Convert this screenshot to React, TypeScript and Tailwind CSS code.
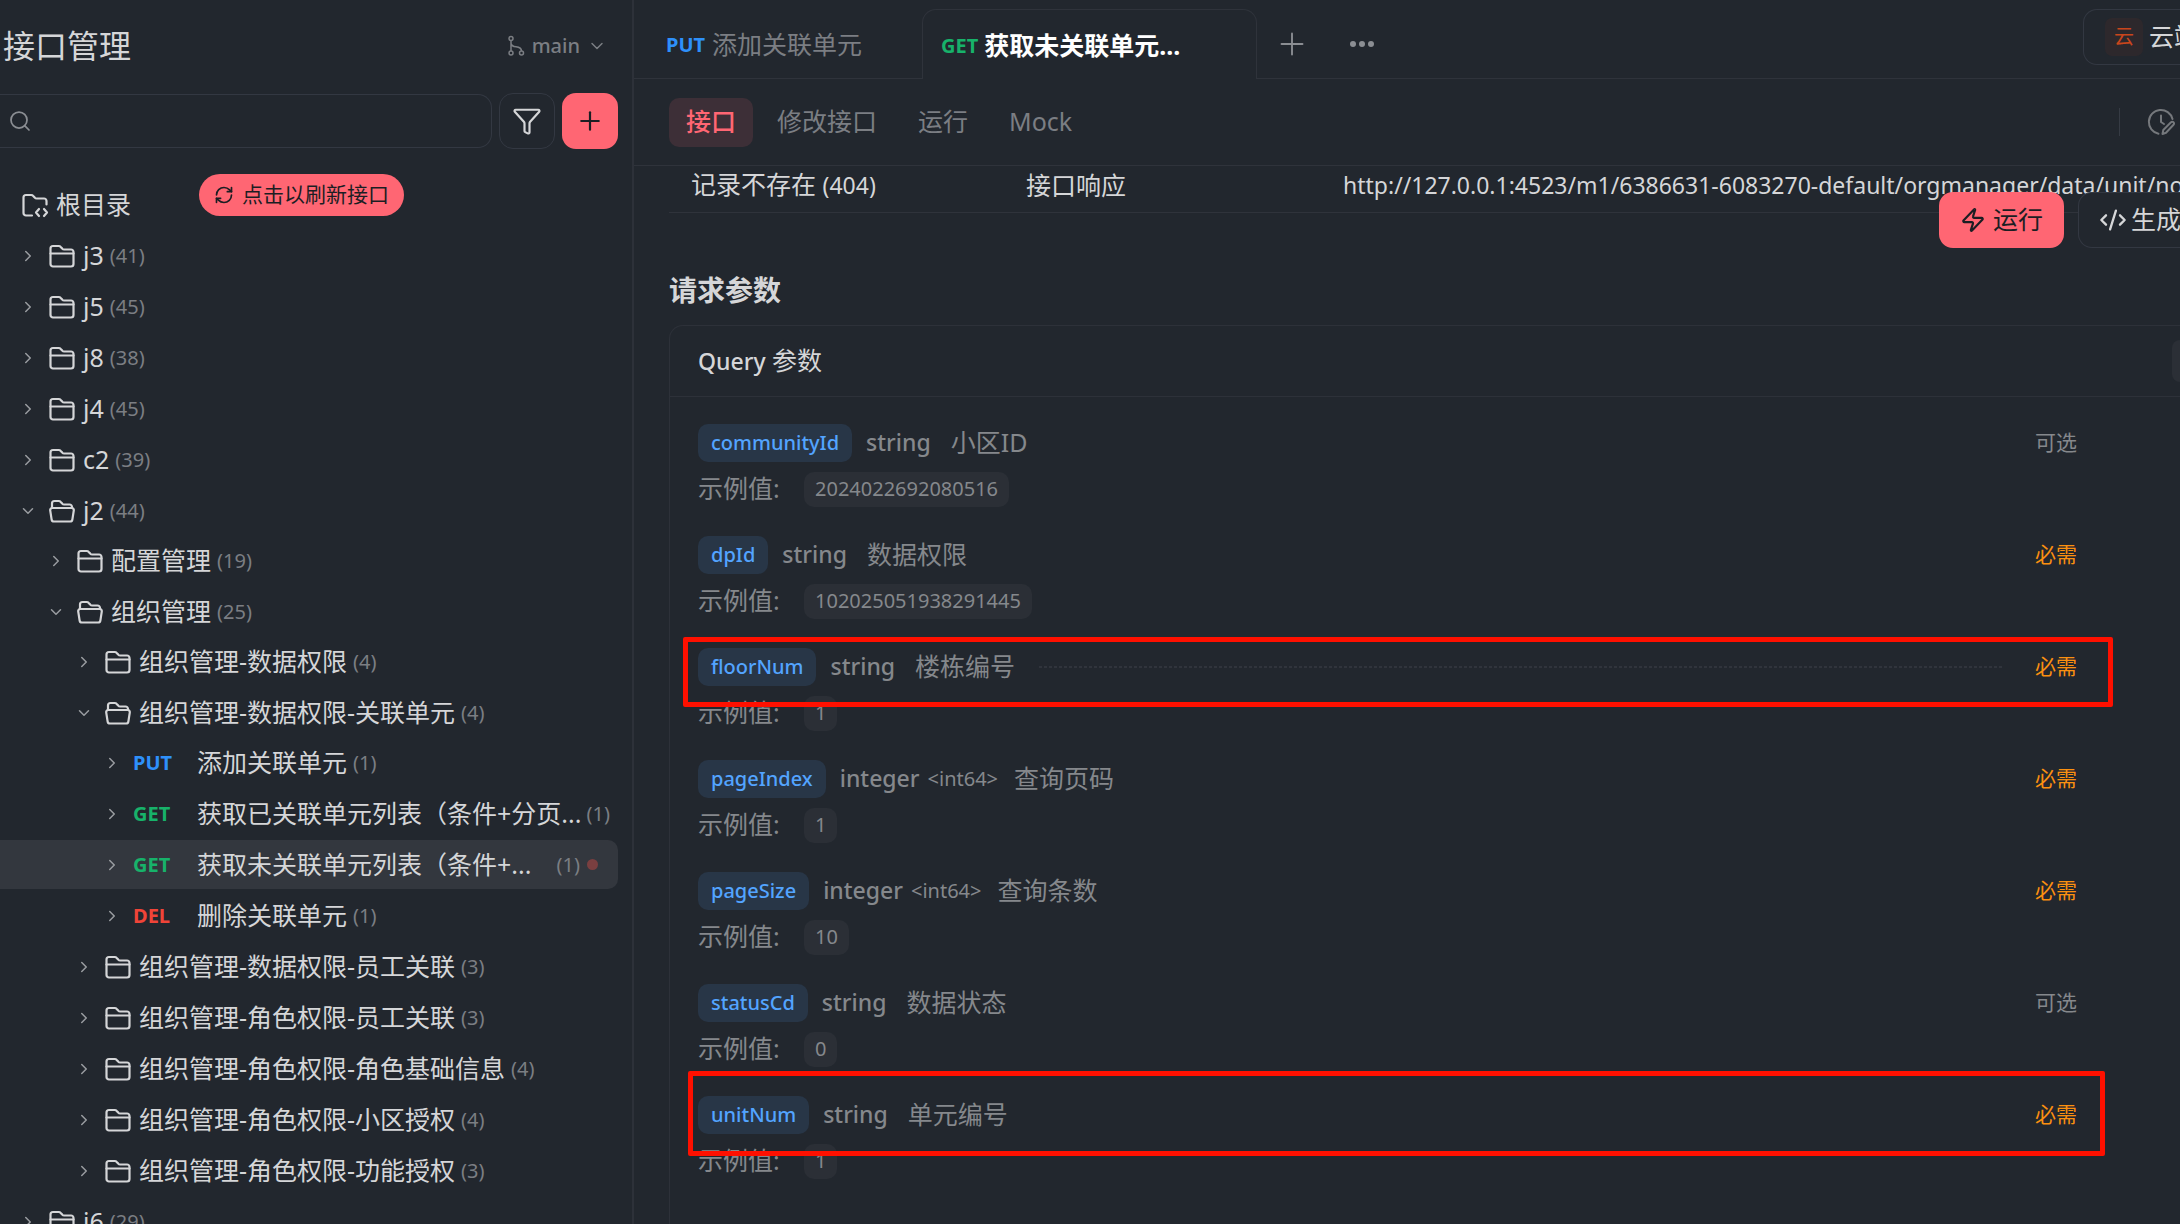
import { useState } from 'react';
import { ChevronDown, ChevronRight, CodeXml, Funnel, Plus, RefreshCw, Search, Zap } from 'lucide-react';

type Method = 'PUT' | 'GET' | 'DEL';

interface TreeNode {
    id: string;
    name: string;
    count: number;
    method?: Method;
    changed?: boolean;
    children?: TreeNode[];
}

interface Param {
    name: string;
    type: string;
    format?: string;
    desc: string;
    example: string;
    required: boolean;
    mark?: string;
    leader?: boolean;
}

const tree: TreeNode[] = [
    { id: 'j3', name: 'j3', count: 41 },
    { id: 'j5', name: 'j5', count: 45 },
    { id: 'j8', name: 'j8', count: 38 },
    { id: 'j4', name: 'j4', count: 45 },
    { id: 'c2', name: 'c2', count: 39 },
    {
        id: 'j2', name: 'j2', count: 44, children: [
            { id: 'config', name: '配置管理', count: 19 },
            {
                id: 'org', name: '组织管理', count: 25, children: [
                    { id: 'data', name: '组织管理-数据权限', count: 4 },
                    {
                        id: 'data-unit', name: '组织管理-数据权限-关联单元', count: 4, children: [
                            { id: 'add', name: '添加关联单元', count: 1, method: 'PUT' },
                            { id: 'linked', name: '获取已关联单元列表（条件+分页...', count: 1, method: 'GET' },
                            { id: 'unlinked', name: '获取未关联单元列表（条件+...', count: 1, method: 'GET', changed: true },
                            { id: 'delete', name: '删除关联单元', count: 1, method: 'DEL' },
                        ],
                    },
                    { id: 'data-staff', name: '组织管理-数据权限-员工关联', count: 3 },
                    { id: 'role-staff', name: '组织管理-角色权限-员工关联', count: 3 },
                    { id: 'role-base', name: '组织管理-角色权限-角色基础信息', count: 4 },
                    { id: 'role-community', name: '组织管理-角色权限-小区授权', count: 4 },
                    { id: 'role-feature', name: '组织管理-角色权限-功能授权', count: 3 },
                ],
            },
        ],
    },
    { id: 'j6', name: 'j6', count: 29 },
];

const params: Param[] = [
    { name: 'communityId', type: 'string', desc: '小区ID', example: '2024022692080516', required: false },
    { name: 'dpId', type: 'string', desc: '数据权限', example: '102025051938291445', required: true },
    { name: 'floorNum', type: 'string', desc: '楼栋编号', example: '1', required: true, leader: true, mark: '-top-[11px] -left-[15px] -right-9 h-[70px]' },
    { name: 'pageIndex', type: 'integer', format: '<int64>', desc: '查询页码', example: '1', required: true },
    { name: 'pageSize', type: 'integer', format: '<int64>', desc: '查询条数', example: '10', required: true },
    { name: 'statusCd', type: 'string', desc: '数据状态', example: '0', required: false },
    { name: 'unitNum', type: 'string', desc: '单元编号', example: '1', required: true, mark: '-top-[25px] -left-[10px] -right-7 h-[85px]' },
];

const methodColor: Record<Method, string> = {
    PUT: 'text-[#2e90fa]',
    GET: 'text-[#17b26a]',
    DEL: 'text-[#f04438]',
};

const indent = ['pl-[21px]', 'pl-[49px]', 'pl-[77px]', 'pl-[105px]'];

function FolderIcon({ open }: { open?: boolean }) {
    return (
        <svg viewBox="0 0 28 28" className="w-7 h-7 shrink-0" fill="none" stroke="currentColor" strokeWidth="2.200" strokeLinejoin="round" strokeLinecap="round">
            {open ? (
                <>
                    <path d="M4 11V6.500A2.500 2.500 0 0 1 6.500 4h4.200c.8 0 1.500.3 2 .9l1.500 1.700c.5.6 1.200.9 2 .9h5.300A2.500 2.500 0 0 1 24 10v1" />
                    <path d="M4.200 11h19.600a2 2 0 0 1 2 2.300l-1.400 9a2.500 2.500 0 0 1-2.500 2.200H6.100a2.500 2.500 0 0 1-2.500-2.200l-1.400-9a2 2 0 0 1 2-2.300z" />
                </>
            ) : (
                <>
                    <path d="M2.500 6.500A2.500 2.500 0 0 1 5 4h5.700c.8 0 1.500.3 2 .9l1.500 1.700c.5.6 1.200.9 2 .9H23a2.500 2.500 0 0 1 2.500 2.500v12a2.500 2.500 0 0 1-2.500 2.500H5A2.500 2.500 0 0 1 2.500 22z" />
                    <path d="M2.500 11.500h23" />
                </>
            )}
        </svg>
    );
}

function RootIcon() {
    return (
        <svg viewBox="0 0 28 28" className="w-7 h-7 shrink-0" fill="none" stroke="currentColor" strokeWidth="2.200" strokeLinejoin="round" strokeLinecap="round">
            <path d="M11 24.500H5A2.500 2.500 0 0 1 2.500 22V6.500A2.500 2.500 0 0 1 5 4h5.200c.8 0 1.500.3 2 .9l1.500 1.700c.5.6 1.200.9 2 .9H23a2.500 2.500 0 0 1 2.500 2.500v3.500" />
            <path d="M18 18l-3 3.500 3 3.500M23 18l3 3.500-3 3.500" />
        </svg>
    );
}

function BranchIcon() {
    return (
        <svg viewBox="0 0 18 22" className="w-[18px] h-[22px]" fill="none" stroke="currentColor" strokeWidth="1.500">
            <circle cx="4" cy="3.500" r="2" />
            <circle cx="4" cy="18" r="2" />
            <circle cx="14.500" cy="18" r="2" />
            <path d="M4 5.500V16M4 8.500c.5 2.500 2 3 5 3.300 3.500.4 5.500 1.200 5.500 4.200" />
        </svg>
    );
}

function HistoryIcon() {
    return (
        <svg viewBox="0 0 28 28" className="w-7 h-7 shrink-0" fill="none" stroke="currentColor" strokeWidth="2" strokeLinecap="round" strokeLinejoin="round">
            <path d="M11.500 25.700A12 12 0 1 1 25.500 11" />
            <path d="M14 7.500v6.500l3 2" />
            <path d="M15.500 26l.8-4 7.700-7.700a1.700 1.700 0 0 1 2.500 0 1.700 1.700 0 0 1 0 2.500L19 24.800z" />
        </svg>
    );
}

function TreeRow({ node, depth, selected, onSelect }: { node: TreeNode; depth: number; selected: string; onSelect: (id: string) => void }) {
    const isSelected = node.id === selected;
    const isLong = node.name.endsWith('...');

    return (
        <li>
            <button
                type="button"
                onClick={() => onSelect(node.id)}
                className={`flex w-full h-[49px] items-center pr-2 rounded-r-[10px] text-left whitespace-nowrap ${indent[depth]} ${isSelected ? 'bg-[#33373e]' : ''}`}
            >
                <span className="flex w-3.5 shrink-0 justify-center text-[#9a9da1]">
                    {node.children ? <ChevronDown className="w-[18px] h-[18px] shrink-0" /> : <ChevronRight className="w-[18px] h-[18px] shrink-0" />}
                </span>
                {node.method ? (
                    <span className={`w-16 ml-3.5 shrink-0 text-[20px] font-bold ${methodColor[node.method]}`}>{node.method}</span>
                ) : (
                    <span className="ml-[13px] mr-[7px]"><FolderIcon open={!!node.children} /></span>
                )}
                <span className="text-[25px]">{node.name}</span>
                <span className={`text-[20px] text-[#7b7e83] ${isLong ? 'ml-auto' : 'ml-1.5'}`}>({node.count})</span>
                {node.changed && <span className="w-[11px] h-[11px] ml-[7px] mr-3 rounded-full bg-[#7a3f40]" />}
            </button>
            {node.children && (
                <ul className="flex flex-col gap-0.5 mt-px">
                    {node.children.map((child) => (
                        <TreeRow key={child.id} node={child} depth={depth + 1} selected={selected} onSelect={onSelect} />
                    ))}
                </ul>
            )}
        </li>
    );
}

function Sidebar() {
    const [selected, setSelected] = useState('unlinked');
    const [keyword, setKeyword] = useState('');

    return (
        <aside className="relative w-[634px] shrink-0 border-r-2 border-[#2d3139] overflow-hidden">
            <div className="flex h-[93px] items-center justify-between pl-[3px] pr-[25px] pb-0.5">
                <h1 className="text-[32px]">接口管理</h1>
                <button type="button" className="flex items-center gap-[7px] text-[20px] font-medium text-[#7b7e83]">
                    <BranchIcon />
                    main
                    <ChevronDown className="w-5 h-5" strokeWidth={1.75} />
                </button>
            </div>

            <div className="flex items-center gap-[7px] pr-3.5">
                <label className="flex flex-1 h-[54px] items-center pl-2 border border-l-0 border-[#333842] rounded-r-[14px] text-[#8b8e93]">
                    <Search className="w-6 h-6" strokeWidth={1.75} />
                    <input
                        type="text"
                        aria-label="搜索"
                        value={keyword}
                        onChange={(e) => setKeyword(e.target.value)}
                        className="flex-1 px-3 text-[20px] text-[#d5d6d8] bg-transparent outline-none"
                    />
                </label>
                <button type="button" aria-label="筛选" className="flex w-14 h-14 items-center justify-center border border-[#333842] rounded-[14px]">
                    <Funnel className="w-[30px] h-[30px]" strokeWidth={1.75} />
                </button>
                <button type="button" aria-label="新建" className="flex w-14 h-14 items-center justify-center bg-[#ff6673] text-[#1b1e23] rounded-[14px]">
                    <Plus className="w-[30px] h-[30px]" strokeWidth={1.75} />
                </button>
            </div>

            <div className="flex h-[49px] mt-[31px] items-center gap-[7px] pl-[21px] text-[25px]">
                <RootIcon />
                根目录
            </div>
            <button type="button" className="absolute top-[174px] left-[199px] flex h-[42px] items-center gap-2 px-[15px] rounded-full bg-[#ff6673] text-[21px] text-[#1b1e23]">
                <RefreshCw className="w-5 h-5" />
                点击以刷新接口
            </button>

            <ul className="flex flex-col gap-0.5 mt-0.5 pr-3.5">
                {tree.map((node) => (
                    <TreeRow key={node.id} node={node} depth={0} selected={selected} onSelect={setSelected} />
                ))}
            </ul>
        </aside>
    );
}

function ParamItem({ param }: { param: Param }) {
    return (
        <li className="relative">
            <div className="flex h-[38px] items-center text-[#85888c] whitespace-nowrap">
                <span className="flex h-full items-center px-[13px] rounded-[10px] bg-[#283647] text-[20px] font-medium text-[#53a4ff]">{param.name}</span>
                <span className="ml-3.5 text-[23px] font-medium">{param.type}</span>
                {param.format && <span className="ml-2 text-[20px]">{param.format}</span>}
                <span className={`text-[25px] ${param.format ? 'ml-4' : 'ml-5'}`}>{param.desc}</span>
                <span className={`flex-1 h-0.5 ml-6 mr-8 ${param.leader ? 'bg-[repeating-linear-gradient(90deg,#30343c_0_3px,transparent_3px_5px)]' : ''}`} />
                <span className={`text-[21px] ${param.required ? 'text-[#fb9010]' : ''}`}>{param.required ? '必需' : '可选'}</span>
            </div>
            <div className="flex h-[35px] mt-2.5 items-center text-[#85888c]">
                <span className="w-[106px] text-[25px]">示例值:</span>
                <span className="flex h-full items-center px-[11px] rounded-[10px] bg-[#2b2f36] text-[20px]">{param.example}</span>
            </div>
            {param.mark && <div className={`absolute border-[5px] border-[#ff1000] rounded-xs pointer-events-none ${param.mark}`} />}
        </li>
    );
}

export default function App() {
    const [view, setView] = useState('接口');

    return (
        <div className="flex h-screen overflow-hidden bg-[#22272e] text-[#d5d6d8] font-['Noto_Sans','Noto_Sans_CJK_SC',sans-serif]">
            <Sidebar />

            <main className="relative flex-1 min-w-0 overflow-hidden">
                <header className="flex h-[79px] border-b border-[#2f333b] whitespace-nowrap">
                    <button type="button" className="flex w-72 pt-3 items-center gap-[7px] pl-8 text-[25px] text-[#7b7e83]">
                        <span className="text-[20px] font-bold text-[#2e90fa]">PUT</span>
                        添加关联单元
                    </button>
                    <button type="button" className="flex w-[335px] h-[70px] mt-[9px] pt-0.5 items-center gap-1.5 pl-[18px] border border-b-0 border-[#2f333b] rounded-t-[14px] bg-[#22272e] text-[25px] font-bold text-white">
                        <span className="text-[20px] text-[#17b26a]">GET</span>
                        <span>获取未关联单元...</span>
                    </button>
                    <button type="button" aria-label="新标签" className="flex w-[70px] h-[88px] items-center justify-center text-[#8b8e93]">
                        <Plus className="w-9 h-9" strokeWidth={1.25} />
                    </button>
                    <button type="button" aria-label="更多" className="flex w-[70px] h-[88px] items-center justify-center gap-[3px]">
                        <span className="w-1.5 h-1.5 rounded-full bg-[#8b8e93]" />
                        <span className="w-1.5 h-1.5 rounded-full bg-[#8b8e93]" />
                        <span className="w-1.5 h-1.5 rounded-full bg-[#8b8e93]" />
                    </button>
                    <button type="button" className="flex w-[97px] h-14 mt-[9px] ml-auto items-center gap-1.5 pl-[21px] border border-r-0 border-[#333842] rounded-l-[14px] text-[25px] overflow-hidden">
                        <span className="flex w-[38px] h-[38px] shrink-0 items-center justify-center rounded-[7px] bg-[#2d282c] text-[20px] text-[#c9461c]">云</span>
                        云端
                    </button>
                </header>

                <nav className="flex h-[87px] items-center gap-[7px] pl-[35px] border-b border-[#2f333b]">
                    {['接口', '修改接口', '运行', 'Mock'].map((label) => (
                        <button
                            key={label}
                            type="button"
                            onClick={() => setView(label)}
                            className={`h-[49px] px-[17px] rounded-[10px] text-[25px] ${view === label ? 'bg-[#3d2f37] text-[#ff6673] font-medium' : 'text-[#7b7e83]'}`}
                        >
                            {label}
                        </button>
                    ))}
                    <span className="w-px h-7 ml-auto bg-[#363b44]" />
                    <button type="button" aria-label="历史" className="ml-5 mr-[5px] text-[#75787c]"><HistoryIcon /></button>
                </nav>

                <section className="pl-[35px]">
                    <table className="w-full table-fixed text-left whitespace-nowrap">
                        <tbody>
                            <tr className="h-[46px] border-b border-[#2f333b]">
                                <td className="w-[335px] pl-[22px] pb-2 text-[25px] leading-8">记录不存在 <span className="text-[23px]">(404)</span></td>
                                <td className="w-[317px] pl-[22px] pb-2 text-[25px] leading-8">接口响应</td>
                                <td className="pl-[22px] pb-2 text-[23px] leading-8 overflow-hidden">http://127.0.0.1:4523/m1/6386631-6083270-default/orgmanager/data/unit/no</td>
                            </tr>
                        </tbody>
                    </table>

                    <h2 className="mt-14 text-[28px] leading-[42px] font-bold">请求参数</h2>

                    <div className="mt-3.5 border border-r-0 border-[#2d3139] rounded-tl-[14px]">
                        <div className="flex h-[71px] items-center justify-between pl-7 border-b border-[#2d3139]">
                            <h3 className="text-[25px]"><span className="text-[23px] font-medium">Query</span> 参数</h3>
                            <button type="button" aria-label="展开" className="w-2 h-[42px] rounded-l-[10px] bg-[#2b2f36]" />
                        </div>
                        <ul className="flex flex-col gap-[29px] pt-[27px] pb-12 pl-7 pr-[103px]">
                            {params.map((param) => (
                                <ParamItem key={param.name} param={param} />
                            ))}
                        </ul>
                    </div>
                </section>

                <div className="absolute top-48 right-0 flex h-14 gap-3.5 text-[25px] whitespace-nowrap">
                    <button type="button" className="flex items-center gap-[7px] px-[21px] rounded-[14px] bg-[#ff6673] text-[#1b1e23]">
                        <Zap className="w-[26px] h-[26px]" />
                        运行
                    </button>
                    <button type="button" className="flex w-[102px] items-center gap-1 pl-5 border border-r-0 border-[#333842] rounded-l-[14px] bg-[#22272e] overflow-hidden">
                        <CodeXml className="w-7 h-7 shrink-0" />
                        生成
                    </button>
                </div>
            </main>
        </div>
    );
}
